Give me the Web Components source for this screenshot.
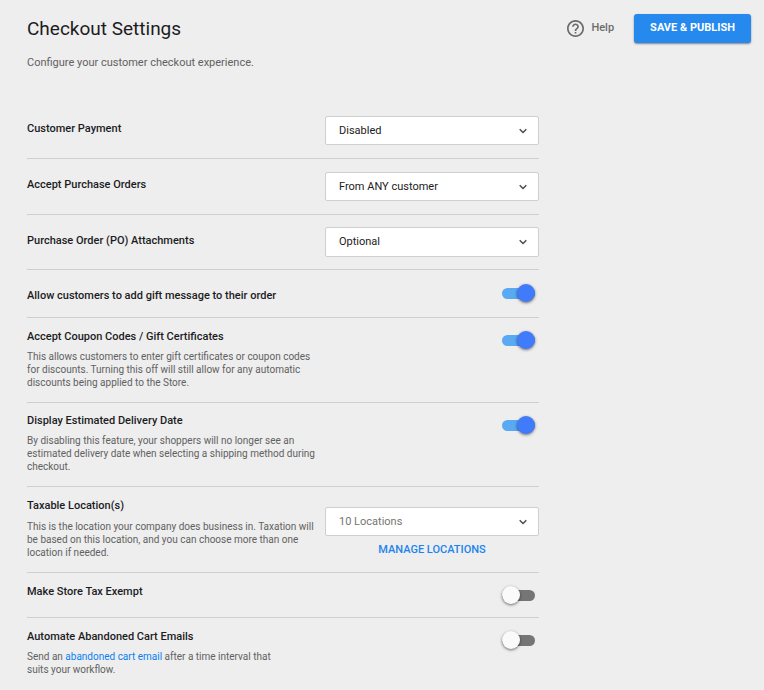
<!DOCTYPE html>
<html lang="en">
<head>
<meta charset="utf-8">
<meta name="viewport" content="width=device-width, initial-scale=1">
<title>Checkout Settings</title>
<style>
  body {
    margin: 0;
    background: #eeeeee;
    color: #1c1c1e;
    font-family: Roboto, "Liberation Sans", sans-serif;
    font-size: 11px;
    line-height: 16px;
  }
</style>
</head>
<body>
<settings-page>
  <page-header slot="header" heading="Checkout Settings">
    Configure your customer checkout experience.
    <help-link slot="actions">Help</help-link>
    <primary-button slot="actions">SAVE &amp; PUBLISH</primary-button>
  </page-header>

  <setting-select class="wide" label="Customer Payment" options="Disabled|Enabled"></setting-select>
  <setting-select class="wide" label="Accept Purchase Orders" options="From ANY customer|From approved customers"></setting-select>
  <setting-select class="wide last" label="Purchase Order (PO) Attachments" options="Optional|Required"></setting-select>
  <setting-toggle class="single" label="Allow customers to add gift message to their order" checked></setting-toggle>
  <setting-toggle label="Accept Coupon Codes / Gift Certificates" checked>This allows customers to enter gift certificates or coupon codes for discounts. Turning this off will still allow for any automatic discounts being applied to the Store.</setting-toggle>
  <setting-toggle class="snug" label="Display Estimated Delivery Date" checked>By disabling this feature, your shoppers will no longer see an estimated delivery date when selecting a shipping method during checkout.</setting-toggle>
  <setting-select class="locations" label="Taxable Location(s)" options="10 Locations">This is the location your company does business in. Taxation will be based on this location, and you can choose more than one location if needed.<text-action slot="action">MANAGE LOCATIONS</text-action></setting-select>
  <setting-toggle class="plain" label="Make Store Tax Exempt"></setting-toggle>
  <setting-toggle class="end" label="Automate Abandoned Cart Emails">Send an <a href="#email">abandoned cart email</a> after a time interval that<br>suits your workflow.</setting-toggle>
</settings-page>

<script>
class BaseElement extends HTMLElement {
  connectedCallback() {
    if (this.shadowRoot) return;
    this.attachShadow({ mode: 'open' }).innerHTML = this.template();
  }
}

customElements.define('settings-page', class extends BaseElement {
  template() {
    return `<style>
      :host { display: block; padding: 14px 13px 12px 27px; }
      main { max-width: 512px; margin-top: 32px; }
    </style>
    <slot name="header"></slot>
    <main><slot></slot></main>`;
  }
});

customElements.define('page-header', class extends BaseElement {
  template() {
    return `<style>
      :host { display: flex; justify-content: space-between; align-items: flex-start; color: #616161; }
      h1 { margin: 3px 0 14px; font-size: 19px; line-height: 24px; font-weight: 400; color: #1c1c1e; }
      p { margin: 0; font-size: 11px; line-height: 16px; }
      .actions { display: flex; align-items: center; gap: 20px; }
    </style>
    <div><h1>${this.getAttribute('heading')}</h1><p><slot></slot></p></div>
    <div class="actions"><slot name="actions"></slot></div>`;
  }
});

customElements.define('help-link', class extends BaseElement {
  template() {
    return `<style>
      :host { display: block; }
      a { display: flex; align-items: center; gap: 7px; color: #6b6b6b; text-decoration: none; font-size: 11px; font-weight: 500; line-height: 16px; }
      svg { display: block; width: 17px; height: 17px; fill: currentColor; }
      span { padding-bottom: 2px; }
    </style>
    <a href="#help">
      <svg viewBox="2 2 20 20" aria-hidden="true"><path d="M11 18h2v-2h-2v2zm1-16C6.48 2 2 6.48 2 12s4.480 10 10 10 10-4.480 10-10S17.520 2 12 2zm0 18c-4.410 0-8-3.590-8-8s3.590-8 8-8 8 3.590 8 8-3.590 8-8 8zm0-14c-2.210 0-4 1.790-4 4h2c0-1.100.9-2 2-2s2 .9 2 2c0 2-3 1.750-3 5h2c0-2.250 3-2.500 3-5 0-2.210-1.790-4-4-4z"/></svg>
      <span><slot></slot></span>
    </a>`;
  }
});

customElements.define('primary-button', class extends BaseElement {
  template() {
    return `<style>
      :host { display: block; }
      button { display: block; border: 0; border-radius: 3px; padding: 6px 16px 8px; background: #2589ee; color: #fff; font: 700 11px/15px Roboto, sans-serif; box-shadow: 0 1px 2px rgba(0,0,0,.45); cursor: pointer; }
    </style>
    <button type="button"><slot></slot></button>`;
  }
});

customElements.define('text-action', class extends BaseElement {
  template() {
    return `<style>
      :host { display: block; text-align: center; }
      button { border: 0; padding: 0; background: none; color: #1c84ee; font: 500 11px/16px Roboto, sans-serif; cursor: pointer; }
    </style>
    <button type="button"><slot></slot></button>`;
  }
});

const rowStyles = `
  :host { display: grid; grid-template-columns: minmax(0, 1fr) 214px; column-gap: 6px; padding: 10px 0 13px; border-bottom: 1px solid #cfcfcf; }
  .text { padding-top: 1px; }
  :host(.wide) { padding: 13px 0; }
  :host(.wide) .text { padding-top: 5px; }
  :host(.last) { padding: 12px 0; }
  :host(.last) .text { padding-top: 6px; }
  :host(.single) { padding: 14px 0 13px; }
  :host(.single) .text { padding-top: 4px; }
  :host(.snug) { padding: 9px 0 13px; }
  :host(.locations) { padding: 10px 0 13px; }
  :host(.locations) .control { padding-top: 10px; }
  :host(.locations) p { margin-top: 6px; }
  :host(.locations) select { color: #757575; }
  :host(.end) { border-bottom: 0; }
  label { display: block; font-size: 11px; line-height: 16px; font-weight: 500; }
  p { margin: 5px 0 0; color: #616161; font-size: 10px; line-height: 13px; }
  ::slotted(a) { color: #0b7fee; text-decoration: none; }
`;

class SettingRow extends BaseElement {
  template() {
    const text = this.textContent.trim() ? '<p><slot></slot></p>' : '';
    return `<style>${rowStyles}${this.controlStyles()}</style>
      <div class="text"><label for="control">${this.getAttribute('label')}</label>${text}</div>
      <div class="control">${this.control()}</div>`;
  }
}

customElements.define('setting-select', class extends SettingRow {
  controlStyles() {
    return `
      .box { display: grid; align-items: center; }
      select, svg { grid-area: 1 / 1; }
      select { appearance: none; width: 100%; height: 29px; margin: 0; padding: 0 30px 0 13px; border: 1px solid #cfcfcf; border-radius: 2px; background: #fff; color: #212121; font: 400 11px/16px Roboto, sans-serif; }
      :host(.last) select { height: 30px; }
      svg { justify-self: end; margin-right: 12px; width: 8px; height: 6px; fill: none; stroke: #4a4d50; stroke-width: 1.5; pointer-events: none; }
      ::slotted(text-action) { margin-top: 6px; }`;
  }
  control() {
    const options = this.getAttribute('options').split('|').map(o => `<option>${o}</option>`).join('');
    return `<div class="box"><select id="control">${options}</select>
      <svg viewBox="0 0 8 6" aria-hidden="true"><path d="M.7 1.200l3.300 3.300 3.300-3.300"/></svg></div>
      <slot name="action"></slot>`;
  }
});

customElements.define('setting-toggle', class extends SettingRow {
  controlStyles() {
    return `
      .control { display: flex; justify-content: flex-end; align-items: flex-start; padding: 3px 4px 0 0; }
      :host(.single) .control { padding-top: 0; }
      :host(.snug) .control { padding-top: 4px; }
      input { appearance: none; display: grid; align-items: center; width: 33px; height: 18px; margin: 0; cursor: pointer; }
      input::before { content: ""; grid-area: 1 / 1; height: 11px; border-radius: 6px; background: #757575; }
      input::after { content: ""; grid-area: 1 / 1; width: 18px; height: 18px; border-radius: 50%; background: #fafafa; box-shadow: 0 1px 3px rgba(0,0,0,.55); justify-self: start; }
      input:checked::before { background: #5aaaf3; }
      input:checked::after { background: #407bfb; justify-self: end; }`;
  }
  control() {
    return `<input id="control" type="checkbox" role="switch"${this.hasAttribute('checked') ? ' checked' : ''}>`;
  }
});
</script>
</body>
</html>
